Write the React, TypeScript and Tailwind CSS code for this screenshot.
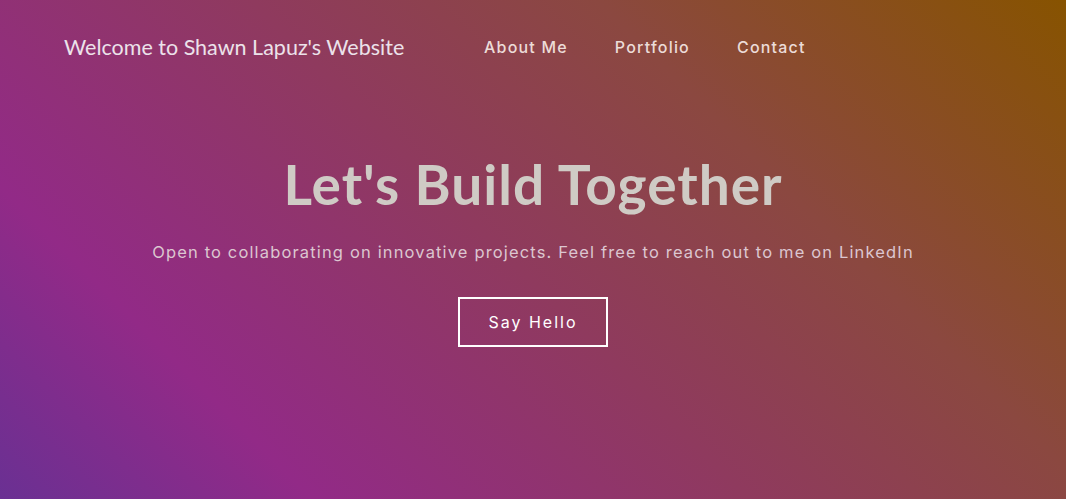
import React from 'react';

const navLinks = ['About Me', 'Portfolio', 'Contact'];

const App: React.FC = () => {
  return (
    <div className="h-[499px] w-full overflow-hidden bg-[linear-gradient(45deg,#6a3093_0%,#922a87_20%,#8f3a5e_48%,#8b4840_70%,#875300_100%)] text-white">
      {/* Header */}
      <header className="flex items-center pl-[64px] pt-[34px]">
        <h1 className="font-['Lato',sans-serif] text-[21.5px] leading-[26px] text-[#ece2ea] w-[420px]">
          Welcome to Shawn Lapuz's Website
        </h1>
        <nav className="flex gap-[47px]">
          {navLinks.map((link) => (
            <a
              key={link}
              href="#"
              className="font-['Inter',sans-serif] text-[16px] font-medium tracking-[1.2px] text-[#ecdcd8]"
            >
              {link}
            </a>
          ))}
        </nav>
      </header>

      {/* Hero */}
      <section className="flex flex-col items-center pt-[92px]">
        <h2 className="font-['Lato',sans-serif] text-[55px] font-bold leading-[64px] tracking-[1px] text-[#cfcbc5]">
          Let's Build Together
        </h2>
        <p className="mt-[24px] font-['Inter',sans-serif] text-[16.5px] tracking-[1.15px] text-[#dcc6d0]">
          Open to collaborating on innovative projects. Feel free to reach out to me on LinkedIn
        </p>
        <button className="mt-[32px] h-[50px] w-[150px] border-2 border-white font-['Inter',sans-serif] text-[16px] tracking-[2px] text-white">
          Say Hello
        </button>
      </section>
    </div>
  );
};

export default App;
